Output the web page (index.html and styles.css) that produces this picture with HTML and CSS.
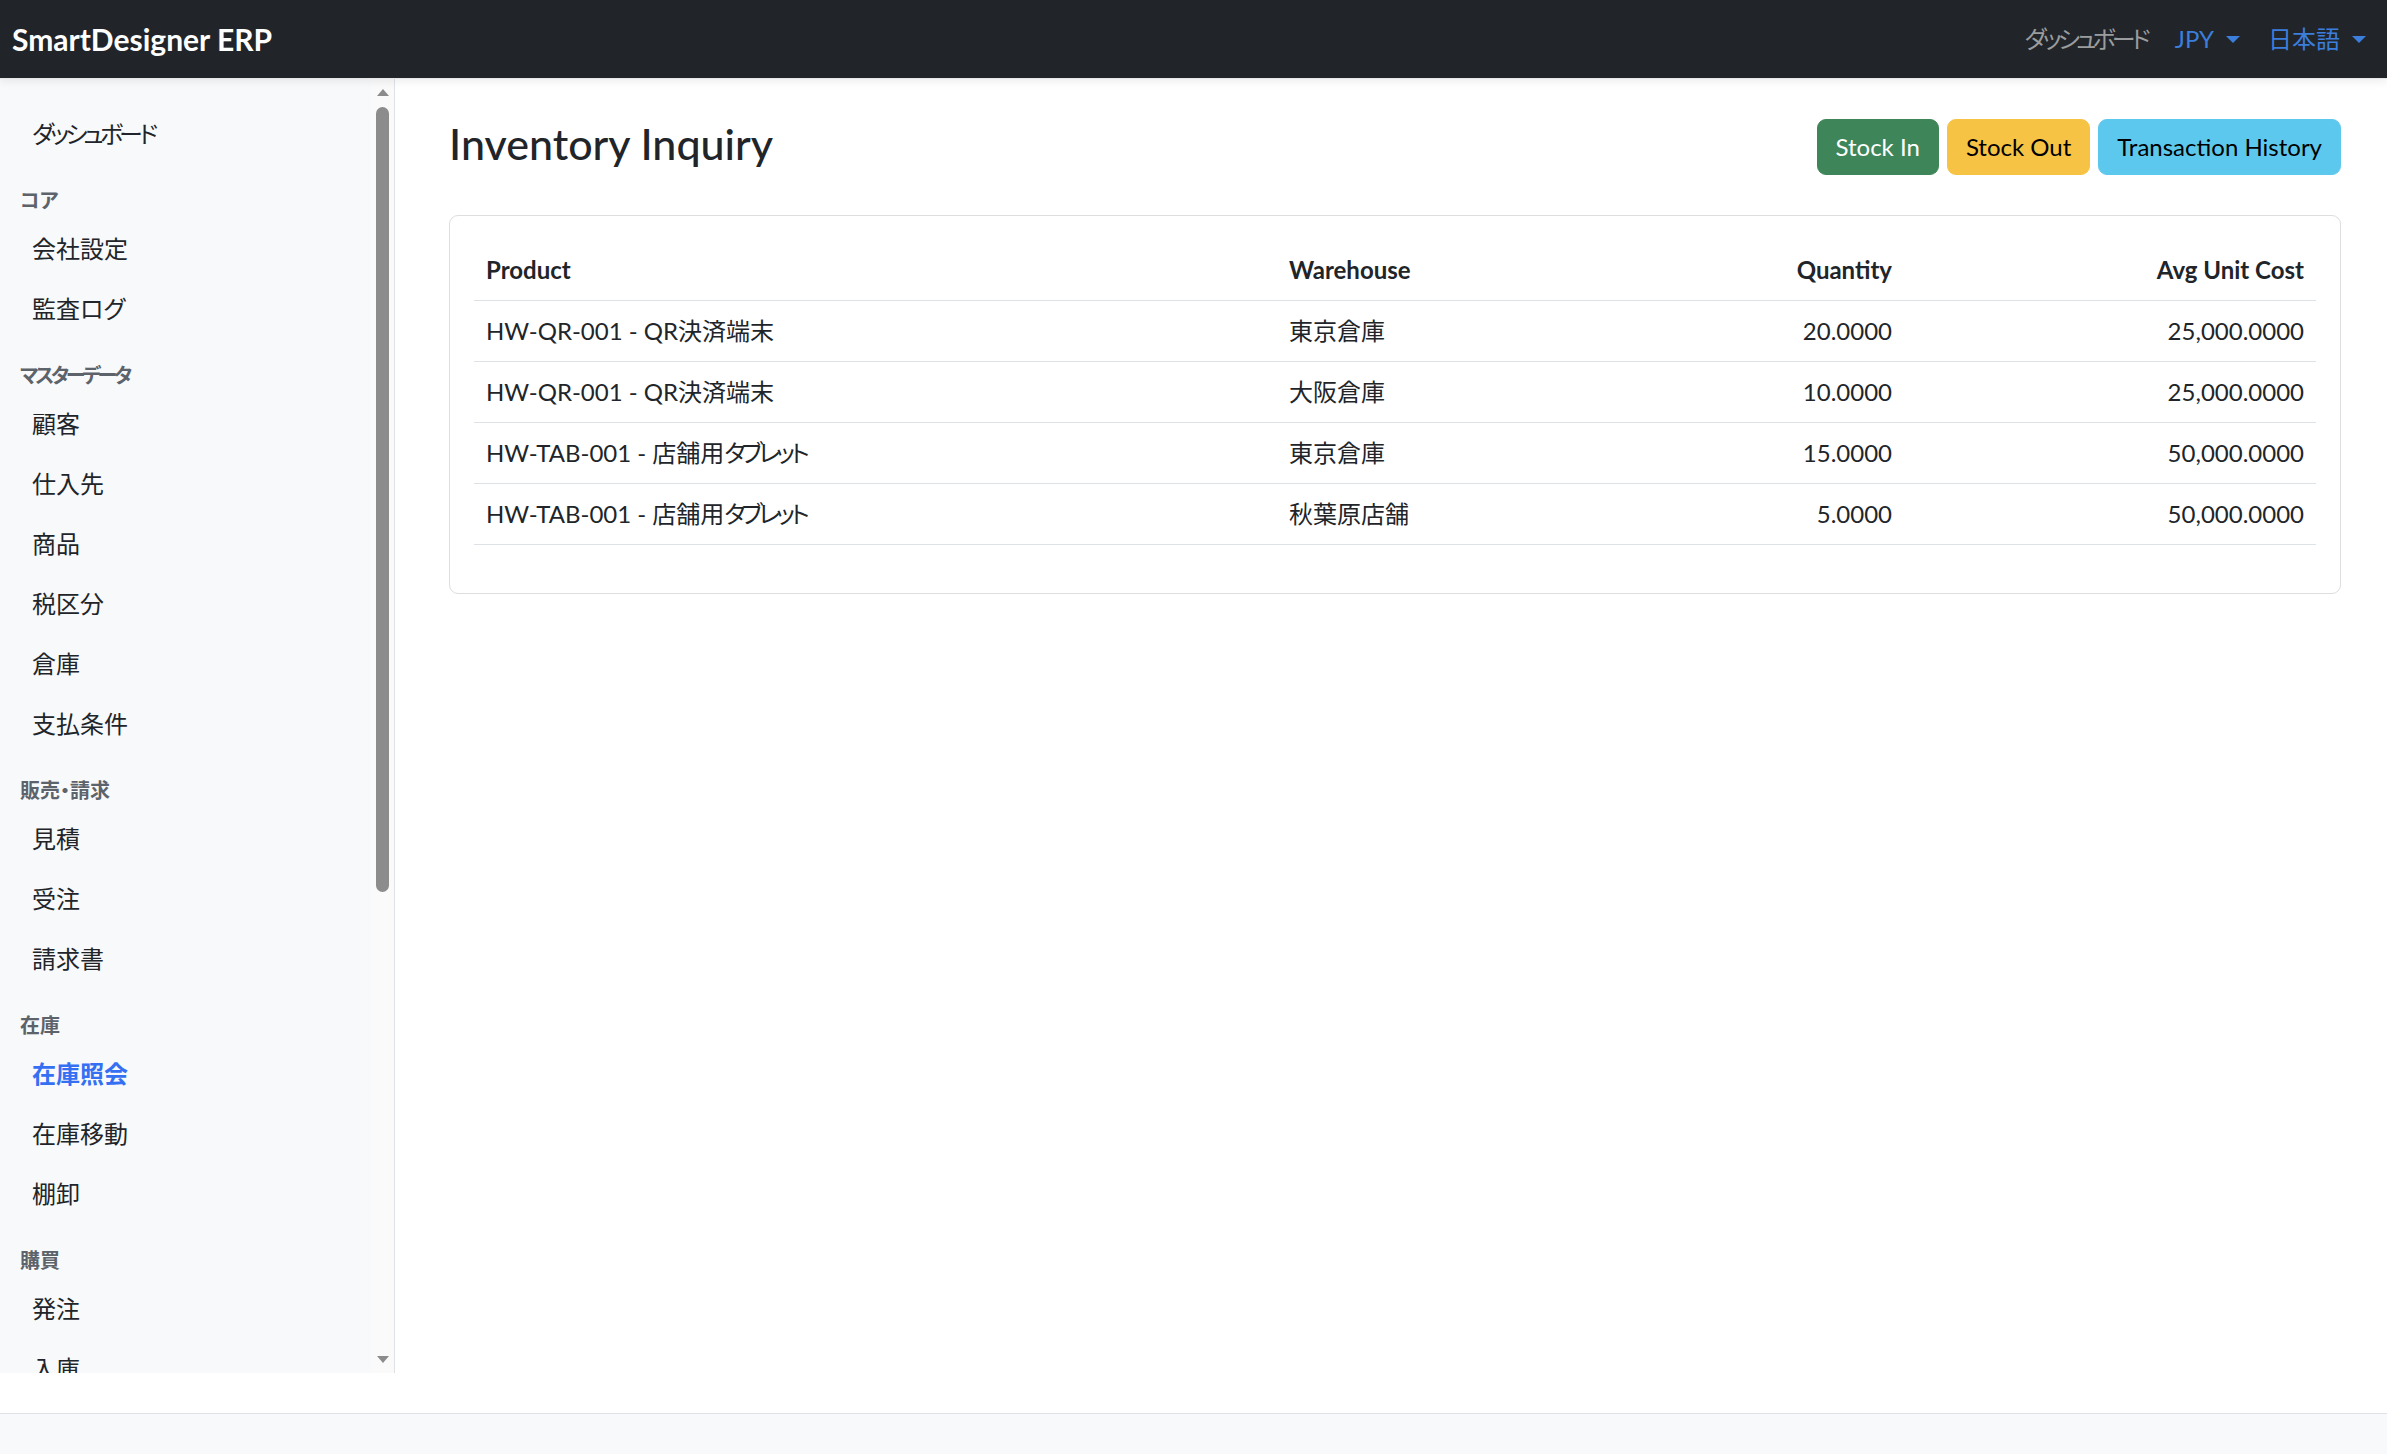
FILE: index.html
```html
<!DOCTYPE html>
<html lang="ja">
<head>
    <meta charset="UTF-8">
    <meta name="viewport" content="width=device-width, initial-scale=1.0">
    <title>在庫照会 - SmartDesigner ERP</title>
    <link rel="stylesheet" href="styles.css">
</head>
<body>
    <!-- 上部ナビゲーション -->
    <nav class="topbar">
        <a class="brand" href="#">SmartDesigner ERP</a>
        <ul class="topnav">
            <li><a class="topnav-link tight" href="#">ダッシュボード</a></li>
            <li><a class="topnav-link topnav-link--active dropdown" href="#">JPY</a></li>
            <li><a class="topnav-link topnav-link--active dropdown" href="#">日本語</a></li>
        </ul>
    </nav>

    <div class="wrapper">
        <!-- サイドメニュー -->
        <aside class="sidebar">
            <div class="side-menu">
                <a class="side-link tight" href="#">ダッシュボード</a>

                <div class="side-heading">コア</div>
                <a class="side-link" href="#">会社設定</a>
                <a class="side-link" href="#">監査ログ</a>

                <div class="side-heading tight">マスターデータ</div>
                <a class="side-link" href="#">顧客</a>
                <a class="side-link" href="#">仕入先</a>
                <a class="side-link" href="#">商品</a>
                <a class="side-link" href="#">税区分</a>
                <a class="side-link" href="#">倉庫</a>
                <a class="side-link" href="#">支払条件</a>

                <div class="side-heading">販売・請求</div>
                <a class="side-link" href="#">見積</a>
                <a class="side-link" href="#">受注</a>
                <a class="side-link" href="#">請求書</a>

                <div class="side-heading">在庫</div>
                <a class="side-link side-link--active" href="#">在庫照会</a>
                <a class="side-link" href="#">在庫移動</a>
                <a class="side-link" href="#">棚卸</a>

                <div class="side-heading">購買</div>
                <a class="side-link" href="#">発注</a>
                <a class="side-link" href="#">入庫</a>
            </div>

            <!-- メニューのスクロールバー -->
            <div class="side-scroll">
                <span class="scroll-btn scroll-btn--up"></span>
                <span class="scroll-thumb"></span>
                <span class="scroll-btn scroll-btn--down"></span>
            </div>
        </aside>

        <!-- メイン -->
        <main class="content">
            <div class="page-head">
                <h1 class="page-title">Inventory Inquiry</h1>
                <div class="toolbar">
                    <a class="btn btn-success" href="#">Stock In</a>
                    <a class="btn btn-warning" href="#">Stock Out</a>
                    <a class="btn btn-info" href="#">Transaction History</a>
                </div>
            </div>

            <div class="card">
                <table class="stock-table">
                    <colgroup>
                        <col class="col-product">
                        <col class="col-warehouse">
                        <col class="col-qty">
                        <col class="col-cost">
                    </colgroup>
                    <thead>
                        <tr>
                            <th>Product</th>
                            <th>Warehouse</th>
                            <th class="num">Quantity</th>
                            <th class="num">Avg Unit Cost</th>
                        </tr>
                    </thead>
                    <tbody>
                        <tr>
                            <td>HW-QR-001 - QR決済端末</td>
                            <td>東京倉庫</td>
                            <td class="num">20.0000</td>
                            <td class="num">25,000.0000</td>
                        </tr>
                        <tr>
                            <td>HW-QR-001 - QR決済端末</td>
                            <td>大阪倉庫</td>
                            <td class="num">10.0000</td>
                            <td class="num">25,000.0000</td>
                        </tr>
                        <tr>
                            <td>HW-TAB-001 - 店舗用<span class="tight">タブレット</span></td>
                            <td>東京倉庫</td>
                            <td class="num">15.0000</td>
                            <td class="num">50,000.0000</td>
                        </tr>
                        <tr>
                            <td>HW-TAB-001 - 店舗用<span class="tight">タブレット</span></td>
                            <td>秋葉原店舗</td>
                            <td class="num">5.0000</td>
                            <td class="num">50,000.0000</td>
                        </tr>
                    </tbody>
                </table>
            </div>
        </main>
    </div>

    <footer class="footer"></footer>
</body>
</html>
```

FILE: styles.css
```css
*{
    box-sizing: border-box;
}

body{
    margin: 0;
    font-family: "Segoe UI", Lato, "Noto Sans CJK JP", sans-serif;
    font-feature-settings: "palt";
    font-size: 24px;
    line-height: 36px;
    color: #212529;
    background-color: #fff;
}

a{
    text-decoration: none;
    color: inherit;
}

/* カタカナ続きの文字を詰める */
.tight{
    letter-spacing: -0.16em;
}

/* 上部ナビゲーション */
.topbar{
    position: relative;
    z-index: 2;
    height: 79px;
    display: flex;
    align-items: center;
    justify-content: space-between;
    padding: 0 21px 0 12px;
    background-color: #212529;
    border-bottom: 1px solid #e6e7e8;
    box-shadow: 0 3px 8px rgba(0, 0, 0, .07);
}

.brand{
    color: #fff;
    font-size: 30px;
    font-weight: 700;
    line-height: 45px;
}

.topnav{
    display: flex;
    margin: 0;
    padding: 0;
    list-style: none;
}

.topnav-link{
    display: block;
    padding: 0 14px;
    color: #9b9c9e;
}

.topnav li:last-child .topnav-link{
    padding-right: 0;
}

.topnav-link--active{
    color: #3b7edc;
}

/* ドロップダウンの三角 */
.dropdown::after{
    content: "";
    display: inline-block;
    margin-left: 12px;
    vertical-align: 5px;
    border-top: 7px solid;
    border-left: 7px solid transparent;
    border-right: 7px solid transparent;
}

.wrapper{
    display: flex;
    height: 1294px;
    margin-bottom: 40px;
}

/* サイドメニュー */
.sidebar{
    flex: none;
    display: flex;
    width: 395px;
    height: 100%;
    background-color: #f8f9fa;
    border-right: 1px solid #dee2e6;
}

.side-menu{
    flex: 1;
    overflow: hidden;
    padding-top: 25px;
}

.side-heading{
    margin: 21px 0 4px;
    padding-left: 20px;
    font-size: 20px;
    line-height: 30px;
    font-weight: 600;
    color: #5c636a;
}

.side-link{
    display: block;
    padding: 12px 32px;
    color: #212529;
}

.side-link--active{
    color: #3570f3;
    font-weight: 600;
}

/* スクロールバー */
.side-scroll{
    flex: none;
    width: 23px;
    display: flex;
    flex-direction: column;
    align-items: center;
    background-color: #fafafa;
}

.scroll-btn{
    flex: none;
    width: 23px;
    height: 23px;
    display: flex;
    align-items: center;
    justify-content: center;
}

.scroll-btn::before{
    content: "";
    border-left: 6px solid transparent;
    border-right: 6px solid transparent;
}

.scroll-btn--up{
    padding-top: 3px;
}

.scroll-btn--up::before{
    border-bottom: 7px solid #8c8c8c;
}

.scroll-btn--down{
    margin-top: auto;
    padding-bottom: 4px;
}

.scroll-btn--down::before{
    border-top: 7px solid #8c8c8c;
}

.scroll-thumb{
    width: 13px;
    height: 785px;
    margin-top: 5px;
    background-color: #8c8c8c;
    border-radius: 7px;
}

/* メイン */
.content{
    flex: 1;
    min-width: 0;
    padding: 40px 46px 0 54px;
}

.page-head{
    display: flex;
    justify-content: space-between;
    align-items: flex-start;
    margin-bottom: 40px;
}

.page-title{
    margin: 0;
    font-size: 43px;
    line-height: 49px;
    font-weight: 500;
}

.toolbar{
    display: flex;
    gap: 8px;
}

.btn{
    display: inline-block;
    padding: 9px 18px;
    border: 1px solid transparent;
    border-radius: 9px;
    line-height: 36px;
}

.btn-success{
    color: #fff;
    background-color: #3e8659;
    border-color: #3e8659;
}

.btn-warning{
    color: #000;
    background-color: #f6c344;
    border-color: #f6c344;
}

.btn-info{
    color: #000;
    background-color: #5dc8ed;
    border-color: #5dc8ed;
}

/* 在庫一覧 */
.card{
    padding: 24px;
    border: 1px solid #dcdee0;
    border-radius: 9px;
}

.stock-table{
    width: 100%;
    margin-bottom: 24px;
    border-collapse: collapse;
    table-layout: fixed;
}

.col-product{ width: 803px; }
.col-warehouse{ width: 330px; }
.col-cost{ width: 412px; }

.stock-table th,
.stock-table td{
    padding: 12px;
    text-align: left;
    border-bottom: 1px solid #dee2e6;
    white-space: nowrap;
}

.stock-table th{
    font-weight: 700;
}

.stock-table .num{
    text-align: right;
}

.footer{
    height: 41px;
    background-color: #f8f9fa;
    border-top: 1px solid #dee2e6;
}
```
